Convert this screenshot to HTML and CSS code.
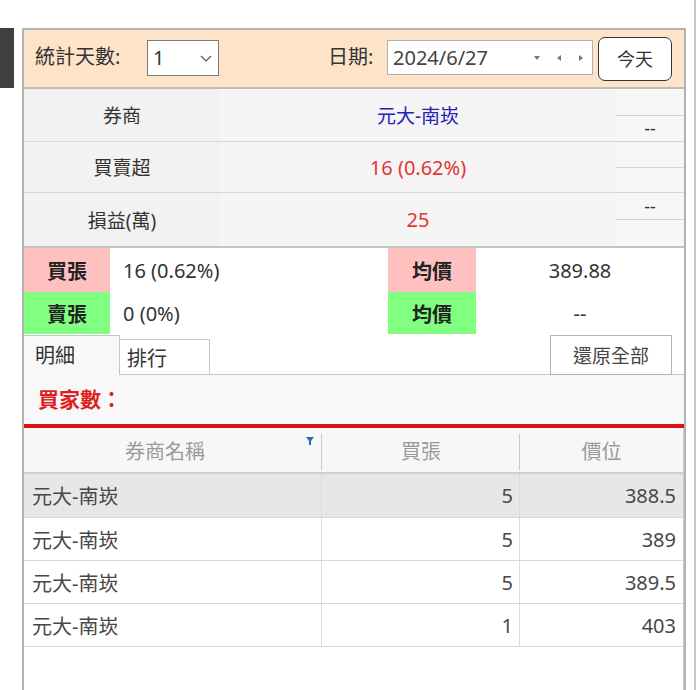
FILE: index.html
```html
<!DOCTYPE html>
<html lang="zh-Hant">
<head>
<meta charset="utf-8">
<title>券商分點</title>
<link rel="stylesheet" href="styles.css">
</head>
<body>
<div class="screen">
  <div class="side"></div>
  <div class="panel">
    <div class="toolbar">
      <span class="lbl lbl-days">統計天數:</span>
      <div class="select">
        <span class="select-val">1</span>
        <svg class="chev" width="12" height="7" viewBox="0 0 12 7"><polyline points="1,1 6,6 11,1" fill="none" stroke="#555" stroke-width="1.2"/></svg>
      </div>
      <span class="lbl lbl-date">日期:</span>
      <div class="date">
        <span class="date-val">2024/6/27</span>
        <svg class="date-arrows" width="52" height="10" viewBox="0 0 52 10">
          <polygon points="2,3 8,3 5,7" fill="#777"/>
          <polygon points="29,2 29,8 25,5" fill="#777"/>
          <polygon points="47,2 47,8 51,5" fill="#777"/>
        </svg>
      </div>
      <div class="today">今天</div>
    </div>

    <div class="info">
      <div class="i-lbl">券商</div>
      <div class="i-val blue">元大-南崁</div>
      <div class="i-side"><div class="half"></div><div class="half line">--</div></div>

      <div class="i-lbl">買賣超</div>
      <div class="i-val red">16 (0.62%)</div>
      <div class="i-side"><div class="half"></div><div class="half line"></div></div>

      <div class="i-lbl last">損益(萬)</div>
      <div class="i-val red last">25</div>
      <div class="i-side last"><div class="half">--</div><div class="half line"></div></div>
    </div>

    <div class="trade">
      <div class="t-tag buy">買張</div>
      <div class="t-val">16 (0.62%)</div>
      <div class="t-tag buy">均價</div>
      <div class="t-avg">389.88</div>

      <div class="t-tag sell">賣張</div>
      <div class="t-val">0 (0%)</div>
      <div class="t-tag sell">均價</div>
      <div class="t-avg">--</div>
    </div>

    <div class="tabs">
      <div class="tab active">明細</div>
      <div class="tab">排行</div>
      <div class="tab-fill"></div>
      <div class="reset">還原全部</div>
      <div class="tab-end"></div>
    </div>

    <div class="tabbody">
      <div class="buyers">買家數：</div>
      <div class="redline"></div>
      <div class="grid">
        <div class="g-head">
          <div class="h-cell c1">
            <span class="h-text">券商名稱</span>
            <svg class="funnel" width="8" height="9" viewBox="0 0 8 9"><polygon points="0,0 8,0 5,4 5,8 3,8 3,4" fill="#2b6cb0"/></svg>
          </div>
          <div class="h-cell c2 sep">買張</div>
          <div class="h-cell c3">價位</div>
        </div>
        <div class="g-row sel">
          <div class="cell c1">元大-南崁</div>
          <div class="cell c2 num">5</div>
          <div class="cell c3 num">388.5</div>
        </div>
        <div class="g-row">
          <div class="cell c1">元大-南崁</div>
          <div class="cell c2 num">5</div>
          <div class="cell c3 num">389</div>
        </div>
        <div class="g-row">
          <div class="cell c1">元大-南崁</div>
          <div class="cell c2 num">5</div>
          <div class="cell c3 num">389.5</div>
        </div>
        <div class="g-row">
          <div class="cell c1">元大-南崁</div>
          <div class="cell c2 num">1</div>
          <div class="cell c3 num">403</div>
        </div>
      </div>
    </div>
  </div>
  <div class="vline"></div>
</div>
</body>
</html>
```

FILE: styles.css
```css
* { box-sizing: border-box; }

html, body {
  margin: 0;
  padding: 0;
  background: #ffffff;
}

body {
  width: 698px;
  height: 690px;
  overflow: hidden;
  font-family: "Noto Sans", "Noto Sans CJK TC", sans-serif;
  font-size: 20px;
  color: #333333;
}

.screen {
  display: flex;
  align-items: flex-start;
  height: 690px;
}

.side {
  width: 14px;
  height: 60px;
  margin-top: 28px;
  margin-right: 8px;
  background: #404040;
}

.panel {
  width: 664px;
  height: 662px;
  margin-top: 28px;
  border-top: 2px solid #b3b3b3;
  border-left: 2px solid #b3b3b3;
  border-right: 2px solid #b3b3b3;
  display: flex;
  flex-direction: column;
  background: #ffffff;
}

.vline {
  width: 2px;
  height: 690px;
  margin-left: 8px;
  background: #c6c6c6;
}

/* toolbar */
.toolbar {
  height: 59px;
  background: #fde4c9;
  border-bottom: 2px solid #bcbcbc;
  display: flex;
  align-items: center;
  padding: 0 0 4px 11px;
  line-height: 24px;
}

.lbl { font-size: 20px; color: #333; }
.lbl-days { width: 112px; }
.lbl-date { width: 59px; margin-left: 109px; }

.select {
  width: 72px;
  height: 36px;
  margin-top: 3px;
  border: 1.5px solid #7a7a7a;
  background: #ffffff;
  display: flex;
  align-items: center;
  justify-content: space-between;
  padding: 0 6px 0 5px;
}
.select-val { font-size: 20px; color: #333; }

.date {
  width: 206px;
  height: 35px;
  margin-top: 2px;
  border: 1px solid #b0b0b0;
  background: #ffffff;
  display: flex;
  align-items: center;
  justify-content: space-between;
  padding: 0 8px 0 5px;
}
.date-val { font-size: 20px; color: #444; }

.today {
  width: 74px;
  height: 44px;
  margin-left: 5px;
  margin-top: 4px;
  border: 1.5px solid #333333;
  border-radius: 7px;
  background: #ffffff;
  display: flex;
  align-items: center;
  justify-content: center;
  font-size: 18px;
  color: #333;
}

/* info */
.info {
  display: grid;
  grid-template-columns: 196px 396px 68px;
  grid-template-rows: 53px 51px 53px;
  background: #f5f5f5;
  border-bottom: 2px solid #c4c4c4;
}
.i-lbl, .i-val, .i-side {
  border-bottom: 1px solid #d6d6d6;
}
.i-lbl.last, .i-val.last, .i-side.last { border-bottom: none; }

.i-lbl {
  display: flex;
  align-items: center;
  justify-content: center;
  font-size: 19px;
  color: #333;
  background: #f2f2f2;
}
.i-val {
  display: flex;
  align-items: center;
  justify-content: center;
  font-size: 20px;
}
.blue { color: #2323b4; font-size: 19px; }
.red { color: #e23636; }

.i-side {
  display: flex;
  flex-direction: column;
  background: #f7f7f7;
}
.half {
  flex: 1;
  display: flex;
  align-items: center;
  justify-content: center;
  font-size: 18px;
  color: #333;
}
.half.line { border-top: 1px solid #d6d6d6; }

/* trade */
.trade {
  display: grid;
  grid-template-columns: 86px 278px 88px 208px;
  grid-template-rows: 44px 42px;
  background: #ffffff;
}
.t-tag {
  display: flex;
  align-items: center;
  justify-content: center;
  font-size: 20px;
  font-weight: bold;
  color: #222;
}
.buy { background: #ffc0c0; }
.sell { background: #80ff80; }
.t-val {
  display: flex;
  align-items: center;
  padding-left: 13px;
  font-size: 20px;
  color: #333;
}
.t-avg {
  display: flex;
  align-items: center;
  justify-content: center;
  font-size: 20px;
  color: #333;
}

/* tabs */
.tabs {
  height: 41px;
  display: flex;
  align-items: flex-end;
  background: #ffffff;
}
.tab {
  height: 36px;
  width: 90px;
  border: 1px solid #c6c6c6;
  border-left: none;
  background: #ffffff;
  display: flex;
  align-items: center;
  padding-left: 7px;
  font-size: 20px;
  color: #333;
}
.tab.active {
  width: 96px;
  height: 40px;
  border-bottom: none;
  background: #f8f8f8;
  padding-left: 11px;
  padding-bottom: 3px;
}
.tab-fill {
  flex: 1;
  height: 1px;
  background: #c6c6c6;
}
.reset {
  width: 122px;
  height: 40px;
  border: 1px solid #b4b4b4;
  background: #ffffff;
  display: flex;
  align-items: center;
  justify-content: center;
  font-size: 19px;
  color: #444;
}
.tab-end {
  width: 12px;
  height: 1px;
  background: #c6c6c6;
}

/* tab body */
.tabbody {
  flex: 1;
  display: flex;
  flex-direction: column;
  background: #f8f8f8;
}
.buyers {
  height: 49px;
  line-height: 49px;
  padding-left: 14px;
  font-size: 21px;
  font-weight: bold;
  color: #dd1f1f;
}
.redline {
  height: 4px;
  background: #d91414;
}

.grid {
  flex: 1;
  background: #ffffff;
  border-right: 1px solid #cccccc;
}
.g-head {
  display: flex;
  height: 46px;
  background: #f7f7f7;
  border-bottom: 2px solid #cfcfcf;
}
.c1 { width: 298px; }
.c2 { width: 198px; }
.c3 { width: 163px; }

.h-cell {
  display: flex;
  align-items: center;
  justify-content: center;
  font-size: 20px;
  color: #9a9a9a;
  background-image: linear-gradient(#c8c8c8, #c8c8c8);
  background-repeat: no-repeat;
  background-size: 1px 36px;
  background-position: right 6px;
}
.h-cell.c3 { background-image: none; }
.h-cell.c1 { justify-content: flex-start; align-items: stretch; }
.h-text {
  flex: 1;
  display: flex;
  align-items: center;
  justify-content: center;
}
.funnel {
  margin-top: 9px;
  margin-right: 8px;
}

.g-row {
  display: flex;
  height: 43px;
  border-bottom: 1px solid #d9d9d9;
  background: #ffffff;
}
.g-row.sel {
  height: 44px;
  background: #e7e7e7;
}
.cell {
  display: flex;
  align-items: center;
  font-size: 20px;
  color: #484848;
  padding-left: 8px;
}
.cell.c1, .cell.c2 { border-right: 1px solid #dcdcdc; }
.cell.num {
  justify-content: flex-end;
  padding-left: 0;
  padding-right: 6px;
}
.cell.c3.num { padding-right: 7px; }
```
